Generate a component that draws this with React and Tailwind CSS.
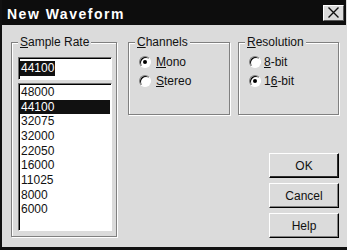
import React from "react";

function Group({ label, className, children }) {
  return (
    <div
      className={
        "relative border border-[#808080] shadow-[inset_1px_1px_0_#fff,1px_1px_0_#fff] " +
        className
      }
    >
      <span className="absolute -top-[8px] left-[6px] px-[2px] bg-[#dbdbdb] leading-[14px] text-[12px] text-[#111]">
        {label}
      </span>
      {children}
    </div>
  );
}

function Radio({ checked }) {
  return (
    <span className="flex w-[12px] h-[12px] shrink-0 items-center justify-center rounded-full bg-white border border-t-[#808080] border-l-[#808080] border-r-white border-b-white shadow-[inset_1px_1px_0_#000]">
      {checked && <span className="w-[4px] h-[4px] rounded-full bg-black" />}
    </span>
  );
}

function Btn({ children, def }) {
  return (
    <div
      className={
        def
          ? "flex h-[25px] w-[70px] items-center justify-center border border-t-white border-l-white border-r-black border-b-black shadow-[inset_-1px_-1px_0_#303030] text-[12px] text-[#111]"
          : "flex h-[25px] w-[70px] items-center justify-center border border-t-white border-l-white border-r-black border-b-black shadow-[inset_-1px_-1px_0_#808080] text-[12px] text-[#111]"
      }
    >
      {children}
    </div>
  );
}

const rates = ["48000", "44100", "32075", "32000", "22050", "16000", "11025", "8000", "6000"];

export default function App() {
  return (
    <div className="w-[347px] h-[250px] overflow-hidden bg-[#dbdbdb] flex flex-col border-l-2 border-b-[3px] border-[#111] font-['Liberation_Sans',Arial,sans-serif] text-[#111]">
      <div className="h-[25px] shrink-0 -ml-[2px] mr-[1px] bg-[#0d0d0d] flex items-center justify-between pl-[7px] pr-[2px]">
        <span className="pt-[2px] text-[14px] leading-[16px] font-bold tracking-[1.5px] text-white">
          New Waveform
        </span>
        <div className="flex h-[16px] w-[21px] items-center justify-center bg-[#dbdbdb] border border-t-white border-l-white border-r-[#555] border-b-[#555]">
          <svg width="11" height="11" viewBox="0 0 11 11">
            <path d="M0.5 0.5 L10.5 10.5 M10.5 0.5 L0.5 10.5" stroke="#111" strokeWidth="1.4" fill="none" />
          </svg>
        </div>
      </div>

      <div className="flex flex-1 pt-[17px] pl-[9px]">
        <Group
          className="w-[106px] h-[195px] pt-[14px] pl-[6px]"
          label={
            <>
              <u className="underline-offset-[1px]">S</u>ample Rate
            </>
          }
        >
          <div className="flex h-[23px] w-[94px] items-center border border-t-[#707070] border-l-[#707070] border-r-white border-b-white shadow-[inset_1px_1px_0_#000] bg-white pl-[1px]">
            <span className="bg-[#111] px-[1px] text-[12px] leading-[15px] text-white">44100</span>
          </div>
          <div className="mt-[3px] h-[148px] w-[94px] border border-t-[#707070] border-l-[#707070] border-r-white border-b-white shadow-[inset_1px_1px_0_#000] bg-white pt-[1px] pl-[1px] pr-[1px]">
            {rates.map((r, i) => (
              <div
                key={r}
                className={
                  i === 1
                    ? "h-[14.67px] leading-[14.67px] bg-[#111] text-white text-[12px] pl-[1px]"
                    : "h-[14.67px] leading-[14.67px] text-[#111] text-[12px] pl-[1px]"
                }
              >
                {r}
              </div>
            ))}
          </div>
        </Group>

        <div className="ml-[11px] flex flex-col">
          <div className="flex gap-[8px]">
            <Group
              className="w-[102px] h-[73px] pt-[9px] pl-[10px]"
              label={
                <>
                  <u className="underline-offset-[1px]">C</u>hannels
                </>
              }
            >
              <div className="flex h-[19px] items-center gap-[5px] text-[12px]">
                <Radio checked />
                <span>
                  <u className="underline-offset-[1px]">M</u>ono
                </span>
              </div>
              <div className="flex h-[19px] items-center gap-[5px] text-[12px]">
                <Radio />
                <span>
                  <u className="underline-offset-[1px]">S</u>tereo
                </span>
              </div>
            </Group>
            <Group
              className="w-[101px] h-[73px] pt-[9px] pl-[10px]"
              label={
                <>
                  <u className="underline-offset-[1px]">R</u>esolution
                </>
              }
            >
              <div className="flex h-[19px] items-center gap-[3px] text-[12px]">
                <Radio />
                <span>
                  <u className="underline-offset-[1px]">8</u>-bit
                </span>
              </div>
              <div className="flex h-[19px] items-center gap-[3px] text-[12px]">
                <Radio checked />
                <span>
                  1<u className="underline-offset-[1px]">6</u>-bit
                </span>
              </div>
            </Group>
          </div>

          <div className="mt-[38px] flex flex-col gap-[5px] self-end">
            <Btn def>OK</Btn>
            <Btn>Cancel</Btn>
            <Btn>Help</Btn>
          </div>
        </div>
      </div>
    </div>
  );
}
